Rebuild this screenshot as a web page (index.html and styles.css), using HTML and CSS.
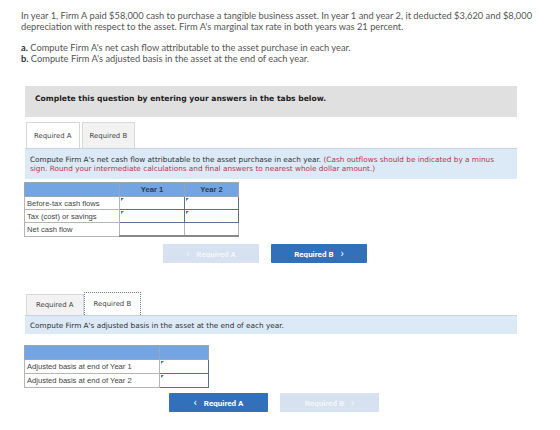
FILE: index.html
```html
<!DOCTYPE html>
<html>
<head>
	<title>Net cash flow and adjusted basis</title>
	<link rel="stylesheet" href="styles.css">
</head>
<body>
	<div class="page">
		<p class="intro">In year 1, Firm A paid $58,000 cash to purchase a tangible business asset. In year 1 and year 2, it deducted $3,620 and $8,000 depreciation with respect to the asset. Firm A's marginal tax rate in both years was 21 percent.</p>
		<p class="parts"><b>a.</b> Compute Firm A's net cash flow attributable to the asset purchase in each year.<br><b>b.</b> Compute Firm A's adjusted basis in the asset at the end of each year.</p>

		<div class="notice">Complete this question by entering your answers in the tabs below.</div>

		<!-- tab A: cash flows -->
		<div class="tabset">
			<div class="tabs">
				<span class="tab active">Required A</span>
				<span class="tab">Required B</span>
			</div>
			<div class="prompt">Compute Firm A's net cash flow attributable to the asset purchase in each year. <span class="warn">(Cash outflows should be indicated by a minus sign. Round your intermediate calculations and final answers to nearest whole dollar amount.)</span></div>
			<table class="grid cash">
				<tr>
					<th class="label"></th>
					<th class="y1">Year 1</th>
					<th class="y2">Year 2</th>
				</tr>
				<tr>
					<td class="label">Before-tax cash flows</td>
					<td class="entry"></td>
					<td class="entry"></td>
				</tr>
				<tr>
					<td class="label">Tax (cost) or savings</td>
					<td class="entry"></td>
					<td class="entry"></td>
				</tr>
				<tr class="total">
					<td class="label">Net cash flow</td>
					<td></td>
					<td></td>
				</tr>
			</table>
			<div class="nav">
				<button class="btn off"><span class="chev">&lsaquo;</span>Required A</button>
				<button class="btn">Required B<span class="chev after">&rsaquo;</span></button>
			</div>
		</div>

		<!-- tab B: adjusted basis -->
		<div class="tabset second">
			<div class="tabs">
				<span class="tab">Required A</span>
				<span class="tab active focus">Required B</span>
			</div>
			<div class="prompt">Compute Firm A's adjusted basis in the asset at the end of each year.</div>
			<table class="grid basis">
				<tr>
					<th class="label"></th>
					<th></th>
				</tr>
				<tr>
					<td class="label">Adjusted basis at end of Year 1</td>
					<td class="entry"></td>
				</tr>
				<tr>
					<td class="label">Adjusted basis at end of Year 2</td>
					<td class="entry"></td>
				</tr>
			</table>
			<div class="nav">
				<button class="btn"><span class="chev">&lsaquo;</span>Required A</button>
				<button class="btn off">Required B<span class="chev after">&rsaquo;</span></button>
			</div>
		</div>
	</div>
</body>
</html>
```

FILE: styles.css
```css
body {
	margin: 0;
	background: #fff;
	font-family: "Lato", "Liberation Sans", sans-serif;
	color: #555;
}
.page {
	padding: 10px 0 0 21px;
	width: 520px;
}
.intro {
	margin: 0;
	font-size: 9.3px;
	line-height: 11px;
}
.parts {
	margin: 10px 0 0;
	font-size: 9.3px;
	line-height: 11px;
}
.parts b {
	color: #333;
}
.notice {
	margin: 22px 0 0 4px;
	width: 492px;
	height: 31px;
	box-sizing: border-box;
	padding: 8px 10px 0;
	background: #e0e0e0;
	font-family: "DejaVu Sans", Verdana, sans-serif;
	font-weight: bold;
	font-size: 7.6px;
	color: #222;
}
.tabset {
	margin: 5px 0 0 4px;
	width: 492px;
}
.tabs {
	display: flex;
	gap: 2px;
	padding-left: 1px;
}
.tab {
	height: 26px;
	box-sizing: border-box;
	padding: 0 7px;
	display: flex;
	align-items: center;
	border: 1px solid #d8d8d8;
	border-bottom: none;
	background: #f2f2f2;
	font-family: "DejaVu Sans", Verdana, sans-serif;
	font-size: 6.9px;
	color: #444;
}
.tab.active {
	background: #fff;
}
.prompt {
	background: #dce9f7;
	border-top: 1px solid #c9d3de;
	padding: 6px 5px 6px;
	font-family: "DejaVu Sans", Verdana, sans-serif;
	font-size: 7.3px;
	line-height: 9px;
	color: #333;
}
.warn {
	color: #b23a4a;
}
.grid {
	border-collapse: collapse;
	margin: 3px 0 0 -1px;
	font-family: "Liberation Sans", Arial, sans-serif;
	font-size: 7.6px;
	color: #444;
}
.grid th {
	background: #72a5e2;
	border: 1px solid #9aa6b4;
	height: 13px;
	padding: 0;
	font-weight: bold;
	color: #2a3b52;
}
.grid td {
	border: 1px solid #b5b5b5;
	height: 12px;
	padding: 0 2px;
	line-height: 9px;
}
.grid td.entry {
	position: relative;
	border: 1px solid #5a6f94;
}
/* little corner marker on the answer cells */
.grid td.entry::before {
	content: "";
	position: absolute;
	left: 1px;
	top: 1px;
	border-top: 3px solid #3a78c8;
	border-right: 3px solid transparent;
}
.cash .label {
	width: 90px;
}
.cash .y1 {
	width: 64px;
}
.cash .y2 {
	width: 53px;
}
.cash .total td {
	border-bottom: 2px solid #888;
}
.cash .total td.label {
	border-bottom: 1px solid #b5b5b5;
}
.basis .label {
	width: 130px;
}
.basis th,
.basis td {
	height: 13px;
}
.basis th {
	width: 48px;
}
.nav {
	display: flex;
	justify-content: center;
	gap: 12px;
	margin-top: 7px;
	padding-right: 12px;
}
.btn {
	width: 96px;
	height: 19px;
	border: none;
	border-radius: 1px;
	background: #3270b9;
	color: #fff;
	font-family: "Roboto", "Liberation Sans", sans-serif;
	font-weight: bold;
	font-size: 8px;
	padding: 0;
}
.btn .chev {
	font-size: 11px;
	font-weight: normal;
	margin-right: 7px;
	vertical-align: -0.5px;
}
.btn .chev.after {
	margin: 0 0 0 7px;
}
.btn.off {
	background: #d6e2f0;
	color: #f3f6fb;
}
.second {
	margin-top: 29px;
}
.second .tabs {
	align-items: flex-end;
	gap: 0;
}
.second .tab {
	height: 21px;
	padding: 0 9px;
}
.second .tab.active {
	height: 23px;
	border: 1px dotted #6a7f9c;
	border-bottom: none;
}
.second .prompt {
	padding: 5px 5px 4px;
	margin-bottom: 11px;
}
.second .nav {
	padding-right: 0;
	padding-left: 6px;
	margin-top: 5px;
}
.second .btn {
	width: 99px;
}
```
